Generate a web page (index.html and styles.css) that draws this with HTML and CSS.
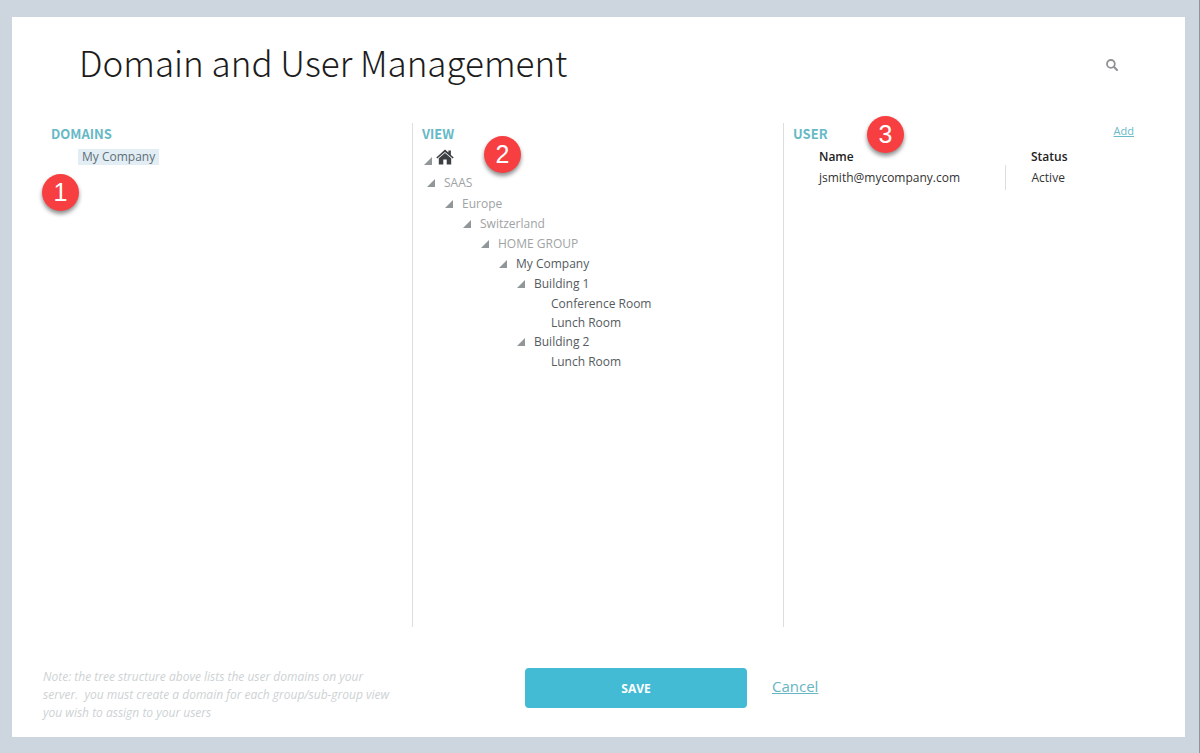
FILE: index.html
```html
<!DOCTYPE html>
<html lang="en">

<head>
    <meta charset="UTF-8">
    <meta name="viewport" content="width=device-width, initial-scale=1.0">
    <title>Domain and User Management</title>
    <link rel="stylesheet" href="styles.css">
</head>

<body>
    <main class="card">
        <header class="card-header">
            <h1>Domain and User Management</h1>
            <button class="search" type="button" aria-label="Search">
                <svg viewBox="0 0 12 12" width="12" height="12">
                    <circle cx="4.9" cy="4.9" r="3.9" fill="none" stroke="#8f9394" stroke-width="1.8" />
                    <path d="M7.8 7.8 L11 11" stroke="#8f9394" stroke-width="2" stroke-linecap="round" />
                </svg>
            </button>
        </header>

        <div class="columns">
            <section class="column">
                <h2>DOMAINS</h2>
                <a class="domain" href="#">My Company</a>
                <span class="step step-domains">1</span>
            </section>

            <section class="column">
                <h2>VIEW</h2>
                <div class="home">
                    <span class="arrow"></span>
                    <svg viewBox="0 0 18 16" width="18" height="16">
                        <path fill="#3c4043" d="M9 0.6 L12.4 3.6 V1.6 H14.9 V5.9 L17.7 8.4 L16.7 9.6 L9 2.9 L1.3 9.6 L0.3 8.4 Z" />
                        <path fill="#3c4043" d="M9 3.9 L15.2 9.3 V15.4 H10.7 V10.6 H7.3 V15.4 H2.8 V9.3 Z" />
                    </svg>
                </div>
                <ul class="tree">
                    <li>
                        <div class="node root muted"><span class="arrow"></span>SAAS</div>
                        <ul>
                            <li>
                                <div class="node muted"><span class="arrow"></span>Europe</div>
                                <ul>
                                    <li>
                                        <div class="node muted"><span class="arrow"></span>Switzerland</div>
                                        <ul>
                                            <li>
                                                <div class="node muted"><span class="arrow"></span>HOME GROUP</div>
                                                <ul>
                                                    <li>
                                                        <div class="node"><span class="arrow"></span>My Company</div>
                                                        <ul>
                                                            <li>
                                                                <div class="node"><span class="arrow"></span>Building 1</div>
                                                                <ul>
                                                                    <li class="leaf">Conference Room</li>
                                                                    <li class="leaf">Lunch Room</li>
                                                                </ul>
                                                            </li>
                                                            <li>
                                                                <div class="node"><span class="arrow"></span>Building 2</div>
                                                                <ul>
                                                                    <li class="leaf">Lunch Room</li>
                                                                </ul>
                                                            </li>
                                                        </ul>
                                                    </li>
                                                </ul>
                                            </li>
                                        </ul>
                                    </li>
                                </ul>
                            </li>
                        </ul>
                    </li>
                </ul>
                <span class="step step-view">2</span>
            </section>

            <section class="column">
                <div class="column-head">
                    <h2>USER</h2>
                    <a class="add" href="#">Add</a>
                </div>
                <table class="users">
                    <thead>
                        <tr>
                            <th>Name</th>
                            <th class="status">Status</th>
                        </tr>
                    </thead>
                    <tbody>
                        <tr>
                            <td>jsmith@mycompany.com</td>
                            <td class="status">Active</td>
                        </tr>
                    </tbody>
                </table>
                <span class="step step-user">3</span>
            </section>
        </div>

        <footer class="card-footer">
            <p class="note">Note: the tree structure above lists the user domains on your server.&nbsp; you must create a domain for each group/sub-group view you wish to assign to your users</p>
            <div class="actions">
                <button class="save" type="button">SAVE</button>
                <a class="cancel" href="#">Cancel</a>
            </div>
        </footer>
    </main>
</body>

</html>
```
FILE: styles.css
```css
* {
    margin: 0;
    padding: 0;
    box-sizing: border-box;
}

body {
    min-height: 100vh;
    padding: 17px 14px 16px 12px;
    border-right: 1px solid #8d969c;
    display: flex;
    font-family: "Open Sans", sans-serif;
    font-size: 12px;
    line-height: 20px;
    color: #555b5e;
    background-color: #cdd5de;
}

.card {
    flex: 1;
    display: flex;
    flex-direction: column;
    padding: 20px 31px 15px 29px;
    background-color: #fff;
}

/* Header */
.card-header {
    display: flex;
    justify-content: space-between;
    align-items: center;
    height: 56px;
    margin-bottom: 30px;
    padding: 0 36px 0 38px;
}

h1 {
    padding-bottom: 6px;
    font-family: "Noto Sans CJK SC", sans-serif;
    font-size: 35px;
    font-weight: 300;
    line-height: 50px;
    color: #1c1c1c;
}

.search {
    display: flex;
    border: none;
    background: none;
    cursor: pointer;
}

/* Columns */
.columns {
    display: grid;
    grid-template-columns: repeat(3, 1fr);
    flex: 1;
}

.column {
    position: relative;
    padding-left: 10px;
}

.column + .column {
    padding-left: 9px;
    border-left: 1px solid #dcdfe0;
}

.column-head {
    display: flex;
    justify-content: space-between;
    padding-right: 20px;
}

h2 {
    font-family: "Noto Sans CJK SC", sans-serif;
    font-size: 13px;
    font-weight: 700;
    line-height: 22px;
    color: #66b9c6;
}

.domain {
    display: inline-block;
    margin: 4px 0 0 27px;
    padding: 0 4px;
    line-height: 16px;
    color: #5d6e78;
    text-decoration: none;
    background-color: #e3eef4;
}

.add {
    font-size: 11px;
    line-height: 16px;
    color: #6ab9c7;
}

/* Tree */
.home {
    display: flex;
    align-items: flex-end;
    gap: 4px;
    height: 20px;
    padding-left: 2px;
}

.arrow {
    flex: none;
    width: 8px;
    height: 8px;
    background-color: #919798;
    clip-path: polygon(100% 0, 100% 100%, 0 100%);
}

.tree {
    margin-top: 8px;
    padding-left: 5px;
}

ul {
    list-style: none;
}

ul ul {
    padding-left: 18px;
}

.node {
    display: flex;
    align-items: center;
    gap: 9px;
}

.root {
    padding-bottom: 1px;
}

.muted {
    color: #a0a3a4;
}

.leaf {
    padding-left: 16px;
    line-height: 19px;
}

/* Users */
.users {
    width: 100%;
    border-collapse: collapse;
    color: #333;
    text-align: left;
}

.users th {
    padding: 4px 0 0 26px;
    font-weight: 600;
    line-height: 16px;
    color: #222;
}

.users td {
    height: 25px;
    padding-left: 26px;
    line-height: 25px;
}

.users .status {
    width: 149px;
}

td.status {
    border-left: 1px solid #dcdfe0;
}

/* Numbered markers over the columns */
.step {
    position: absolute;
    width: 37px;
    height: 37px;
    border-radius: 50%;
    font-family: "Liberation Sans", sans-serif;
    font-size: 25px;
    line-height: 37px;
    text-align: center;
    color: #fff;
    background-color: #f73f42;
    box-shadow: 0 3px 4px rgba(0, 0, 0, 0.45);
}

.step-domains {
    top: 51px;
    left: 1px;
}

.step-view {
    top: 13px;
    left: 71px;
}

.step-user {
    top: -7px;
    left: 83px;
}

/* Footer */
.card-footer {
    display: flex;
    align-items: flex-start;
    padding-top: 41px;
}

.note {
    width: 372px;
    margin-right: 112px;
    padding: 0 18px 0 2px;
    font-style: italic;
    line-height: 18px;
    color: #cdd2d4;
}

.actions {
    display: flex;
    align-items: center;
    gap: 25px;
}

.save {
    width: 222px;
    height: 40px;
    border: none;
    border-radius: 4px;
    font-family: "Open Sans", sans-serif;
    font-size: 12px;
    font-weight: 700;
    color: #fff;
    background-color: #43bbd4;
    cursor: pointer;
}

.cancel {
    padding-bottom: 4px;
    font-size: 15px;
    color: #65b5c2;
}
```
